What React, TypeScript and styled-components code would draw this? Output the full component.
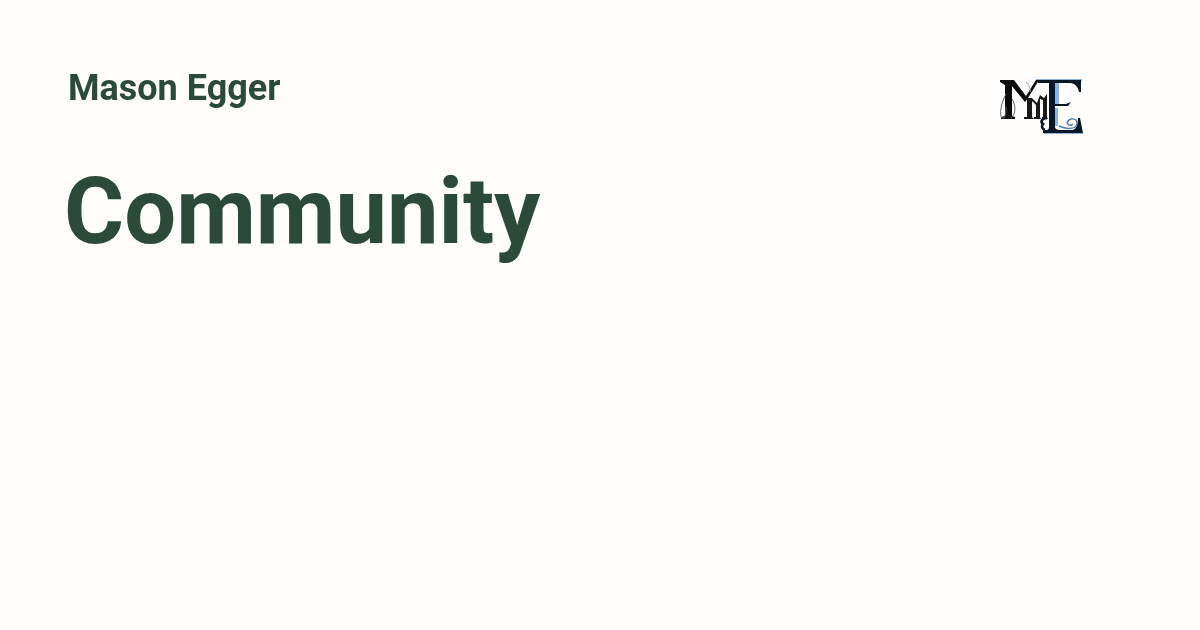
import React from "react";
import styled, { createGlobalStyle } from "styled-components";

const Global = createGlobalStyle`
  html, body {
    margin: 0;
    padding: 0;
    background: #fffdfb;
  }
`;

const Card = styled.main`
  width: 1200px;
  height: 630px;
  box-sizing: border-box;
  padding: 64px 116px 0 64px;
  background: #fffdfb;
  color: #2b4a3a;
  font-family: Roboto, "Liberation Sans", sans-serif;
  font-weight: 700;
  overflow: hidden;
`;

const TopRow = styled.header`
  display: flex;
  justify-content: space-between;
  align-items: flex-start;
`;

const Author = styled.div`
  font-size: 36px;
  line-height: 48px;
  padding-left: 4px;
  will-change: transform;
`;

const LogoMark = styled.svg`
  display: block;
  width: 84px;
  height: 56px;
  margin-top: 15px;
`;

const Title = styled.h1`
  margin: 0;
  margin-top: 23px;
  font-size: 92px;
  line-height: 108px;
  font-weight: 700;
  will-change: transform;
`;

function Logo() {
  return (
    <LogoMark viewBox="0 0 84 56" fill="none">
      {/* blue shadow behind the E */}
      <path
        d="M36 0H82V2H36zM55 3h4v23h-4zM55 29h3v18h-3zM44 54h39v1H44z"
        fill="#8fb4dc"
      />
      {/* big M */}
      <path
        d="M0 1H14L26 17 36 1H39L28 19 25 23 12 7V37L15 38V40H1V38L5 37V6L0 3z"
        fill="#0b0b0b"
      />
      {/* inner small m */}
      <path
        d="M27 19L32 19 37 24 40 16 44 19 47 15V38L48 40H42V38H43V21L40 20V38L41 40H34V38H36V26L32 22V38L34 40H24V38H27z"
        fill="#1a1a1a"
      />
      {/* thin loops on the first stem */}
      <path
        d="M6 15C1 24-1 36 2 39 5 41 6 34 6 28"
        stroke="#666"
        strokeWidth="1"
      />
      <path d="M12 20C16 26 16 35 11 39" stroke="#666" strokeWidth="1" />
      <path d="M26 3C29 6 31 9 30 13" stroke="#999" strokeWidth="1" />
      {/* E */}
      <path
        d="M38 1H81V13H79C78 8 75 4 70 4H55V25H66L71 23 68 27H55V48C55 50 57 51 60 51H72C76 51 78 46 78 39H80L83 54H43V51H47C48 51 49 50 49 48V4H38z"
        fill="#081726"
      />
      {/* curl in the E */}
      <path
        d="M59 47C65 50 76 51 77 45 78 40 71 38 68 42 66 45 70 48 73 45"
        stroke="#4d7ea8"
        strokeWidth="1.5"
      />
      {/* blob at the foot of the small m */}
      <path
        d="M47 39C42 39 40 43 43 45 41 47 42 50 45 51"
        stroke="#081726"
        strokeWidth="2.6"
      />
    </LogoMark>
  );
}

export default function App() {
  return (
    <Card>
      <Global />
      <TopRow>
        <Author>Mason Egger</Author>
        <Logo />
      </TopRow>
      <Title>Community</Title>
    </Card>
  );
}
